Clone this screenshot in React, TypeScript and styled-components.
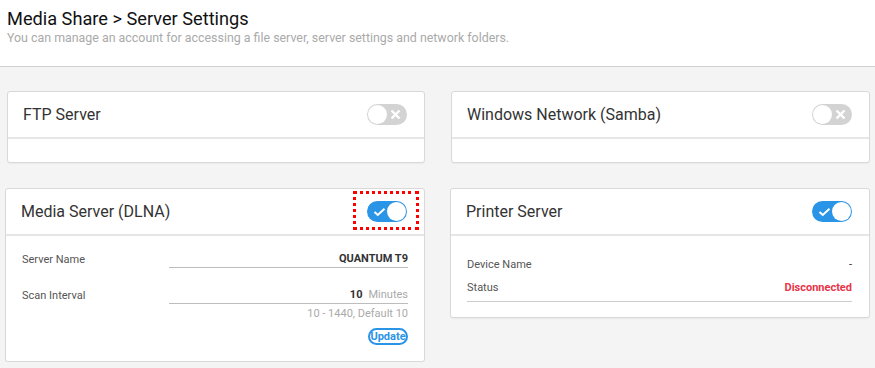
import styled, { createGlobalStyle } from "styled-components";

const GlobalStyle = createGlobalStyle`
  html, body {
    margin: 0;
    padding: 0;
    background: #f4f4f4;
    font-family: Roboto, "Liberation Sans", Arial, sans-serif;
  }
`;

const BLUE = "#2a94e6";

const Header = styled.header`
  height: 67px;
  box-sizing: border-box;
  padding: 9px 7px 0;
  background: #fff;
  border-bottom: 1px solid #cfcfcf;
`;

const PageTitle = styled.h1`
  margin: 0;
  font-size: 18.2px;
  font-weight: 400;
  line-height: 20px;
  color: #111;
`;

const PageDesc = styled.p`
  margin: 0;
  font-size: 12.4px;
  line-height: 17px;
  color: #aaa;
`;

const Grid = styled.main`
  display: grid;
  grid-template-columns: 420px 420px;
  column-gap: 25px;
  row-gap: 25px;
  align-items: start;
  padding: 24px 0 0 5px;
`;

const Card = styled.section<{ $shift?: number }>`
  margin-left: ${(p) => p.$shift ?? 0}px;
  background: #fff;
  border: 1px solid #d9d9d9;
  border-radius: 3px;
  box-shadow: 0 1px 1px rgba(0, 0, 0, 0.04);
`;

const CardHeader = styled.div`
  display: flex;
  align-items: center;
  justify-content: space-between;
  height: 45px;
  padding: 0 17px 0 15px;
  border-bottom: 2px solid #e6e6e6;
`;

const CardTitle = styled.h2`
  margin: 0;
  font-size: 16px;
  font-weight: 400;
  color: #333;
`;

const EmptyBody = styled.div`
  height: 23px;
`;

const FormBody = styled.div`
  padding: 14px 16px 16px;
  display: flex;
  flex-direction: column;
`;

const FieldRow = styled.div<{ $gap?: number }>`
  display: flex;
  align-items: flex-end;
  margin-top: ${(p) => p.$gap ?? 0}px;
`;

const Label = styled.span`
  width: 147px;
  font-size: 11px;
  line-height: 17px;
  color: #555;
`;

const Field = styled.div`
  flex: 1;
  display: flex;
  justify-content: flex-end;
  align-items: baseline;
  gap: 6px;
  height: 17px;
  line-height: 17px;
  border-bottom: 1px solid #bdbdbd;
`;

const Strong = styled.span`
  font-size: 11px;
  font-weight: 700;
  color: #333;
`;

const Unit = styled.span`
  font-size: 11px;
  color: #aaa;
`;

const Hint = styled.div`
  margin-top: 2px;
  text-align: right;
  font-size: 11px;
  line-height: 16px;
  color: #aaa;
`;

const Actions = styled.div`
  display: flex;
  justify-content: flex-end;
  margin-top: 6px;
`;

const UpdateButton = styled.button`
  box-sizing: border-box;
  width: 40px;
  height: 17px;
  padding: 0;
  border: 2px solid ${BLUE};
  border-radius: 10px;
  background: #fff;
  color: ${BLUE};
  font-family: inherit;
  font-size: 11px;
  font-weight: 700;
  line-height: 13px;
  cursor: pointer;
`;

const InfoBody = styled.div`
  padding: 17px 17px 15px 16px;
`;

const InfoList = styled.div`
  padding-bottom: 2px;
  border-bottom: 1px solid #cccccc;
`;

const InfoRow = styled.div`
  display: flex;
  justify-content: space-between;
  font-size: 11px;
  line-height: 23px;
  color: #555;
`;

const InfoValue = styled.span<{ $alert?: boolean }>`
  font-weight: ${(p) => (p.$alert ? 700 : 400)};
  color: ${(p) => (p.$alert ? "#e8354a" : "#333")};
`;

const Track = styled.span<{ $on: boolean }>`
  position: relative;
  display: inline-block;
  width: 40px;
  height: 21px;
  border-radius: 11px;
  background: ${(p) => (p.$on ? BLUE : "#d3d3d3")};
  flex-shrink: 0;
`;

const Knob = styled.span<{ $on: boolean }>`
  position: absolute;
  top: 1px;
  left: ${(p) => (p.$on ? "20px" : "1px")};
  width: 19px;
  height: 19px;
  border-radius: 50%;
  background: #fff;
`;

const Mark = styled.svg<{ $on: boolean }>`
  position: absolute;
  top: 4px;
  left: ${(p) => (p.$on ? "6px" : "22px")};
  width: 13px;
  height: 13px;
`;

const FocusFrame = styled.span`
  position: relative;
  display: inline-flex;

  &::after {
    content: "";
    position: absolute;
    top: -10px;
    right: -12px;
    bottom: -8px;
    left: -14px;
    border: 3px dotted #ff0000;
    pointer-events: none;
  }
`;

const Toggle = ({ on }: { on: boolean }) => (
  <Track $on={on}>
    <Mark $on={on} viewBox="0 0 13 13">
      {on ? (
        <path d="M1.5 7 L4.8 10 L11.5 3.8" fill="none" stroke="#fff" strokeWidth="2" />
      ) : (
        <path d="M2.5 2.5 L10.5 10.5 M10.5 2.5 L2.5 10.5" fill="none" stroke="#fff" strokeWidth="2.4" />
      )}
    </Mark>
    <Knob $on={on} />
  </Track>
);

export default function App() {
  return (
    <>
      <GlobalStyle />
      <Header>
        <PageTitle>Media Share &gt; Server Settings</PageTitle>
        <PageDesc>
          You can manage an account for accessing a file server, server settings and network folders.
        </PageDesc>
      </Header>
      <Grid>
        <Card $shift={2}>
          <CardHeader>
            <CardTitle>FTP Server</CardTitle>
            <Toggle on={false} />
          </CardHeader>
          <EmptyBody />
        </Card>
        <Card $shift={1}>
          <CardHeader>
            <CardTitle>Windows Network (Samba)</CardTitle>
            <Toggle on={false} />
          </CardHeader>
          <EmptyBody />
        </Card>

        <Card>
          <CardHeader>
            <CardTitle>Media Server (DLNA)</CardTitle>
            <FocusFrame>
              <Toggle on />
            </FocusFrame>
          </CardHeader>
          <FormBody>
            <FieldRow>
              <Label>Server Name</Label>
              <Field>
                <Strong>QUANTUM T9</Strong>
              </Field>
            </FieldRow>
            <FieldRow $gap={18}>
              <Label>Scan Interval</Label>
              <Field>
                <Strong>10</Strong>
                <Unit>Minutes</Unit>
              </Field>
            </FieldRow>
            <Hint>10 - 1440, Default 10</Hint>
            <Actions>
              <UpdateButton type="button">Update</UpdateButton>
            </Actions>
          </FormBody>
        </Card>
        <Card>
          <CardHeader>
            <CardTitle>Printer Server</CardTitle>
            <Toggle on />
          </CardHeader>
          <InfoBody>
            <InfoList>
              <InfoRow>
                <span>Device Name</span>
                <InfoValue>-</InfoValue>
              </InfoRow>
              <InfoRow>
                <span>Status</span>
                <InfoValue $alert>Disconnected</InfoValue>
              </InfoRow>
            </InfoList>
          </InfoBody>
        </Card>
      </Grid>
    </>
  );
}
